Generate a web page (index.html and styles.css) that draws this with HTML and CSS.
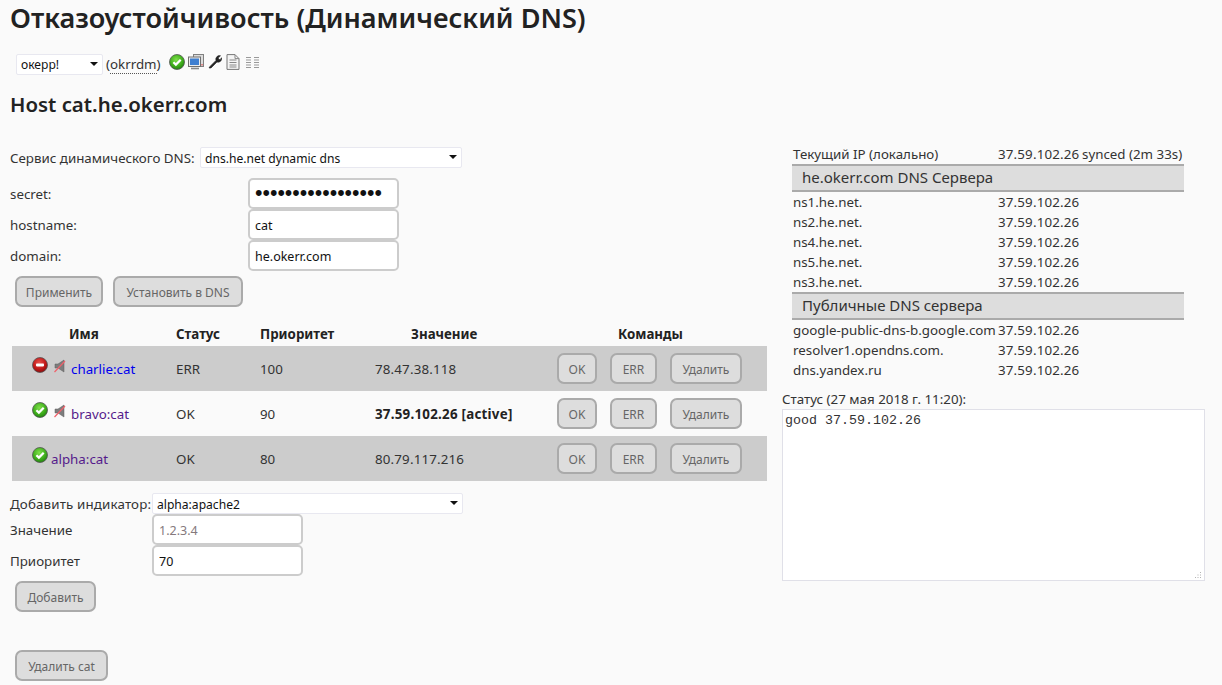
FILE: index.html
```html
<!DOCTYPE html>
<html lang="ru">
<head>
<meta charset="utf-8">
<title>Отказоустойчивость</title>
<link rel="stylesheet" href="styles.css">
</head>
<body>
<svg class="defs" width="0" height="0" aria-hidden="true">
  <defs>
    <radialGradient id="gGreen" cx="45%" cy="35%" r="70%"><stop offset="0" stop-color="#7fe04a"/><stop offset=".6" stop-color="#3fae1c"/><stop offset="1" stop-color="#1f7a10"/></radialGradient>
    <radialGradient id="gRed" cx="45%" cy="35%" r="70%"><stop offset="0" stop-color="#e8504a"/><stop offset=".6" stop-color="#c01818"/><stop offset="1" stop-color="#7c0d0d"/></radialGradient>
    <symbol id="ok" viewBox="0 0 16 16"><circle cx="8" cy="8" r="7.5" fill="url(#gGreen)" stroke="#555" stroke-width=".8"/><path d="M4.4 8.2l2.5 2.4 4.8-4.8" fill="none" stroke="#fff" stroke-width="2.2"/></symbol>
    <symbol id="err" viewBox="0 0 16 16"><circle cx="8" cy="8" r="7.5" fill="url(#gRed)" stroke="#555" stroke-width=".8"/><rect x="4" y="6.6" width="8" height="2.8" rx=".8" fill="#fff"/></symbol>
    <symbol id="mute" viewBox="0 0 12 14"><path d="M1 5h3l6-4v12l-6-4H1z" fill="#7d7d7d" stroke="#5c5c5c" stroke-width=".5"/><path d="M.5 13L11 2" stroke="#f0606a" stroke-width="1.2"/></symbol>
  </defs>
</svg>

<h1 class="title">Отказоустойчивость (Динамический DNS)</h1>

<div class="project">
  <span class="select-wrap select-project">
    <select class="select"><option>окерр!</option></select>
  </span>
  <span class="project-id">(<span class="dotted">okrrdm</span>)</span>
  <span class="tools">
    <svg class="i16"><use href="#ok"/></svg>
    <svg class="i16" viewBox="0 0 16 16"><rect x="5.500" y=".5" width="10" height="12" fill="#dcdcdc" stroke="#808080"/><rect x=".5" y="3" width="12" height="9.500" fill="#ececec" stroke="#707070"/><rect x="2" y="4.500" width="9" height="6.500" fill="#3f7fd0"/><path d="M3 14.500h8" stroke="#888" stroke-width="1.600"/><path d="M14 10v1.500" stroke="#d33"/></svg>
    <svg class="i14" viewBox="0 0 14 14"><path d="M1 13l1-1.600 6-6A3.600 3.600 0 0 1 12.500.8L10.200 3l.6 1.300 1.300.4 1.500-2A3.600 3.600 0 0 1 9 7L3 13z" fill="#222" stroke="#222" stroke-width=".6"/></svg>
    <svg class="i14" viewBox="0 0 14 16"><path d="M1 .6h8l4 4v10.800H1z" fill="#f4f4f4" stroke="#777"/><path d="M9 .6v4h4M3.500 6h7M3.500 8.500h7M3.500 11h7M3.500 13h7" fill="none" stroke="#888"/></svg>
    <svg class="i-cols" viewBox="0 0 13 14"><path d="M0 2.500h5M0 5h5M0 7.500h5M0 10h5M0 12.500h5M8 2.500h5M8 5h5M8 7.500h5M8 10h5M8 12.500h5" stroke="#999"/></svg>
  </span>
</div>

<h2 class="host">Host cat.he.okerr.com</h2>

<div class="main">
  <div class="left">
    <div class="service-row">
      <label class="service-label">Сервис динамического DNS:</label>
      <span class="select-wrap select-service"><select class="select"><option>dns.he.net dynamic dns</option></select></span>
    </div>

    <div class="fields">
      <label class="field-label">secret:</label><input class="input input-secret" type="password" value="12345678901234567">
      <label class="field-label">hostname:</label><input class="input" type="text" value="cat">
      <label class="field-label">domain:</label><input class="input" type="text" value="he.okerr.com">
    </div>

    <div class="actions">
      <button class="btn btn-apply">Применить</button>
      <button class="btn btn-dns">Установить в DNS</button>
    </div>

    <table class="backends">
      <thead>
        <tr>
          <th class="col-name">Имя</th>
          <th class="col-status">Статус</th>
          <th class="col-prio">Приоритет</th>
          <th class="col-value">Значение</th>
          <th class="col-cmd">Команды</th>
        </tr>
      </thead>
      <tbody>
        <tr class="row-dark">
          <td class="name-cell"><svg class="state"><use href="#err"/></svg><svg class="mute"><use href="#mute"/></svg><a class="link-new" href="#">charlie:cat</a></td>
          <td>ERR</td><td>100</td><td class="num">78.47.38.118</td>
          <td class="cmds"><button class="btn btn-ok">OK</button><button class="btn btn-err">ERR</button><button class="btn btn-del">Удалить</button></td>
        </tr>
        <tr>
          <td class="name-cell"><svg class="state"><use href="#ok"/></svg><svg class="mute"><use href="#mute"/></svg><a class="link-seen" href="#">bravo:cat</a></td>
          <td>OK</td><td>90</td><td class="active">37.59.102.26 [active]</td>
          <td class="cmds"><button class="btn btn-ok">OK</button><button class="btn btn-err">ERR</button><button class="btn btn-del">Удалить</button></td>
        </tr>
        <tr class="row-dark">
          <td class="name-cell"><svg class="state state-tight"><use href="#ok"/></svg><a class="link-seen" href="#">alpha:cat</a></td>
          <td>OK</td><td>80</td><td class="num">80.79.117.216</td>
          <td class="cmds"><button class="btn btn-ok">OK</button><button class="btn btn-err">ERR</button><button class="btn btn-del">Удалить</button></td>
        </tr>
      </tbody>
    </table>

    <div class="add-form">
      <label class="add-label">Добавить индикатор:</label>
      <span class="select-wrap select-add"><select class="select"><option>alpha:apache2</option></select></span>
      <label class="add-label">Значение</label><input class="input" type="text" placeholder="1.2.3.4">
      <label class="add-label">Приоритет</label><input class="input" type="text" value="70">
    </div>
    <div class="add-actions"><button class="btn btn-add">Добавить</button></div>
    <div class="delete-actions"><button class="btn btn-remove">Удалить cat</button></div>
  </div>

  <div class="right">
    <table class="dns">
      <tbody>
        <tr><td class="dns-name">Текущий IP (локально)</td><td class="dns-ip">37.59.102.26</td><td class="dns-extra">synced (2m 33s)</td></tr>
        <tr><th class="dns-head" colspan="3">he.okerr.com DNS Сервера</th></tr>
        <tr><td class="dns-name">ns1.he.net.</td><td class="dns-ip">37.59.102.26</td><td></td></tr>
        <tr><td class="dns-name">ns2.he.net.</td><td class="dns-ip">37.59.102.26</td><td></td></tr>
        <tr><td class="dns-name">ns4.he.net.</td><td class="dns-ip">37.59.102.26</td><td></td></tr>
        <tr><td class="dns-name">ns5.he.net.</td><td class="dns-ip">37.59.102.26</td><td></td></tr>
        <tr><td class="dns-name">ns3.he.net.</td><td class="dns-ip">37.59.102.26</td><td></td></tr>
        <tr><th class="dns-head" colspan="3">Публичные DNS сервера</th></tr>
        <tr><td class="dns-name">google-public-dns-b.google.com</td><td class="dns-ip">37.59.102.26</td><td></td></tr>
        <tr><td class="dns-name">resolver1.opendns.com.</td><td class="dns-ip">37.59.102.26</td><td></td></tr>
        <tr><td class="dns-name">dns.yandex.ru</td><td class="dns-ip">37.59.102.26</td><td></td></tr>
      </tbody>
    </table>
    <div class="status-label">Статус (27 мая 2018 г. 11:20):</div>
    <div class="status-wrap">
      <textarea class="status-box">good 37.59.102.26</textarea>
      <svg class="grip" viewBox="0 0 8 8"><path d="M6 1h1v1H6zM6 3.500h1v1H6zM3.500 3.500h1v1h-1zM6 6h1v1H6zM3.500 6h1v1h-1zM1 6h1v1H1z" fill="#b4b4b4"/></svg>
    </div>
  </div>
</div>
</body>
</html>
```

FILE: styles.css
```css
* { box-sizing: border-box; }
html, body { margin: 0; padding: 0; }
body {
  background: #fafafa;
  color: #333;
  font-family: "Noto Sans", "Open Sans", sans-serif;
  font-size: 13.33px;
  line-height: 20px;
  height: 685px;
  overflow: hidden;
}
.defs { position: absolute; }

.title {
  margin: 0 0 0 10px;
  height: 48px;
  font-size: 27.1px;
  line-height: 36px;
  font-weight: 600;
  color: #222;
}
.project {
  display: flex;
  align-items: center;
  height: 32px;
  margin-left: 16px;
}
.project-id { margin-left: 3px; }
.dotted { border-bottom: 1px dotted #555; }
.tools { display: flex; align-items: center; gap: 3px; margin-left: 8px; margin-top: -5px; }
.i16 { width: 16px; height: 16px; }
.i14 { width: 14px; height: 16px; margin-left: 1px; }
.i-cols { width: 13px; height: 14px; margin-left: 3px; }

.host {
  margin: 0 0 0 10px;
  height: 65px;
  padding-top: 9px;
  font-size: 20.4px;
  line-height: 30px;
  font-weight: 600;
  color: #222;
}

.main { display: flex; }
.left { width: 782px; flex: none; padding-top: 2px; }
.right { flex: none; width: 423px; }

.select-wrap { position: relative; display: inline-block; }
.select-wrap::after {
  content: "";
  position: absolute;
  right: 5px;
  top: 8px;
  border: 4px solid transparent;
  border-top: 4px solid #111;
  border-bottom: 0;
  pointer-events: none;
}
.select {
  appearance: none;
  display: block;
  width: 100%;
  height: 100%;
  background: #fff;
  border: 1px solid #e8e8f0;
  border-radius: 2px;
  font: inherit;
  font-size: 12.1px;
  color: #111;
  padding: 1px 4px 0;
}
.select-project { width: 87px; height: 21px; }
.select-project .select { padding-top: 0; }
.select-service { width: 262px; height: 21px; }
.select-add { width: 311px; height: 21px; }

.service-row { display: flex; align-items: center; height: 21px; padding-left: 10px; }
.service-label { flex: none; width: 190px; white-space: nowrap; }
.fields {
  display: grid;
  grid-template-columns: 238px 151px;
  grid-auto-rows: 31px;
  margin: 10px 0 0 10px;
  align-items: center;
}
.input {
  width: 100%;
  height: 31px;
  background: #fff;
  border: 2px solid #ccc;
  border-radius: 5px;
  font: inherit;
  font-size: 12.5px;
  color: #111;
  padding: 1px 5px 0;
}
.input-secret { font-family: "Liberation Sans", sans-serif; font-size: 21.33px; padding-top: 0; }
.input::placeholder { color: #85797d; }

.actions { display: flex; gap: 10px; margin: 5px 0 0 15px; }
.btn {
  height: 31px;
  padding: 2px 0 0;
  background: #ddd;
  border: 2px solid #aaa;
  border-radius: 7px;
  font: inherit;
  font-size: 12px;
  color: #666;
}
.btn-apply { width: 88px; }
.btn-dns { width: 130px; }
.btn-ok { width: 40px; }
.btn-err { width: 47px; }
.btn-del { width: 72px; }
.btn-add { width: 81px; }
.btn-remove { width: 93px; }

.backends {
  border-collapse: collapse;
  table-layout: fixed;
  width: 755px;
  margin: 18px 0 0 12px;
}
.backends th { height: 21px; padding: 0 0 2px; line-height: 19px; font-size: 13.33px; font-weight: 700; color: #222; text-align: left; }
.backends td { height: 45px; padding: 0; }
.col-name { width: 164px; padding-left: 57px !important; }
.col-status { width: 84px; }
.col-prio { width: 115px; }
.col-value { width: 182px; padding-left: 36px !important; }
.col-cmd { text-align: center !important; padding-right: 23px !important; }
.row-dark { background: #ccc; }
.name-cell { padding: 0 0 2px 20px !important; white-space: nowrap; }
.state { width: 16px; height: 16px; vertical-align: 1px; }
.mute { width: 12px; height: 14px; margin-left: 6px; margin-right: 5px; vertical-align: 1px; }
.state-tight { margin-right: 3px; }
.link-new { color: #00e; text-decoration: none; }
.link-seen { color: #551a8b; text-decoration: none; }
.num { letter-spacing: .17px; }
.active { font-weight: 700; color: #222; letter-spacing: .25px; }
.cmds { white-space: nowrap; }
.cmds .btn { margin-right: 13px; }

.add-form {
  display: grid;
  grid-template-columns: 142px 151px;
  grid-template-rows: 21px 31px 31px;
  margin: 12px 0 0 10px;
}
.add-label { display: flex; align-items: center; white-space: nowrap; }
.add-label:first-child { letter-spacing: .15px; }
.select-add { grid-column: 2 / 3; }
.add-actions { margin: 5px 0 0 15px; }
.delete-actions { margin: 38px 0 0 15px; }

.dns { border-collapse: separate; border-spacing: 0; table-layout: fixed; width: 392px; margin-left: 10px; margin-top: -1px; }
.dns td { height: 20px; padding: 0; }
.dns-name { width: 206px; padding-left: 1px !important; white-space: nowrap; }
.dns-ip { width: 84px; white-space: nowrap; letter-spacing: .17px; }
.dns-extra { white-space: nowrap; }
.dns-head {
  height: 28px;
  padding: 0 0 2px 10px;
  background: #ddd;
  border-top: 2px solid #aaa;
  border-bottom: 2px solid #aaa;
  font-size: 15px;
  font-weight: 400;
  text-align: left;
  color: #333;
}
.status-label { margin-top: 9px; height: 20px; }
.status-wrap { position: relative; width: 423px; height: 172px; }
.status-box {
  display: block;
  width: 100%;
  height: 100%;
  margin: 0;
  resize: none;
  background: #fff;
  border: 1px solid #e0e0e8;
  font-family: "Liberation Mono", monospace;
  font-size: 13.33px;
  line-height: 15px;
  color: #333;
  padding: 3px 2px;
}
.grip { position: absolute; right: 3px; bottom: 2px; width: 8px; height: 8px; }
```
